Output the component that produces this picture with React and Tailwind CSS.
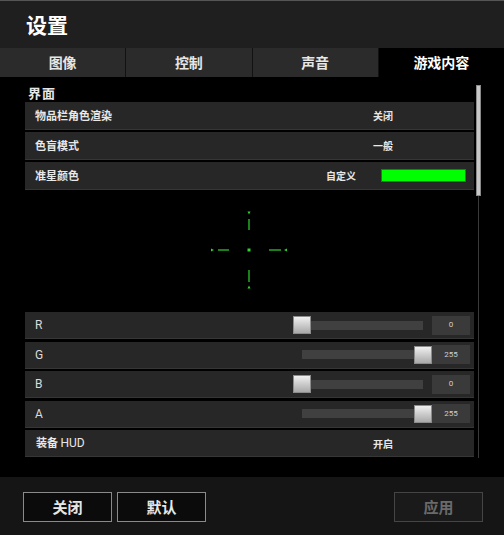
import React from 'react';

const CJK = { fontFamily: '"Noto Sans CJK SC", "Noto Sans", sans-serif' };
const LATIN = { fontFamily: 'Roboto, "Noto Sans CJK SC", sans-serif' };

const tabs = ['图像', '控制', '声音', '游戏内容'];

const channels = [
  { name: 'R', value: 0 },
  { name: 'G', value: 255 },
  { name: 'B', value: 0 },
  { name: 'A', value: 255 },
];

const Row = ({ children, className = '' }) => (
  <div className={`flex items-center bg-[#272727] border-b border-[#363636] ${className}`}>
    {children}
  </div>
);

const Slider = ({ value }) => {
  // thumb travel across a 139px control, track inset by half the thumb
  const left = Math.round((value / 255) * 121);
  return (
    <div className="relative w-[139px] h-[18px] flex items-center">
      <div className="mx-[9px] h-[9px] w-full bg-[#404040]" />
      <div
        className="absolute top-0 w-[18px] h-[18px] border border-[#8c8c8c] bg-gradient-to-b from-[#f0f0f0] to-[#a9a9a9]"
        style={{ left }}
      />
    </div>
  );
};

const Crosshair = () => (
  <svg width="449" height="120" viewBox="0 0 449 120">
    <g stroke="#27b827" strokeWidth="1.4" fill="none">
      <line x1="224" y1="29" x2="224" y2="40" />
      <line x1="224" y1="80" x2="224" y2="92" />
      <line x1="193" y1="60" x2="204" y2="60" />
      <line x1="244" y1="60" x2="256" y2="60" />
    </g>
    <g fill="#2fd22f">
      <rect x="222.5" y="58.5" width="3" height="3" />
      <polygon points="222.5,21.5 225.5,21.5 224,24.5" />
      <polygon points="222.5,98.5 225.5,98.5 224,95.5" />
      <polygon points="186,58.5 186,61.5 189,60" />
      <polygon points="262,58.5 262,61.5 259,60" />
    </g>
  </svg>
);

export default function App() {
  return (
    <div className="w-[504px] h-[535px] bg-black text-[#e8e8e8] overflow-hidden" style={CJK}>
      {/* Header */}
      <div className="h-[48px] bg-[#1f1f1f] border-t border-[#555] flex items-center pl-[26px]">
        <h1 className="text-[21px] font-bold text-white leading-none">设置</h1>
      </div>

      {/* Tabs */}
      <div className="flex h-[29px]">
        {tabs.map((t, i) => (
          <div
            key={t}
            className={
              i === 3
                ? 'flex-1 flex items-center justify-center bg-black text-white text-[14px] font-bold'
                : 'flex-1 flex items-center justify-center bg-[#2b2b2b] border-r border-[#121212] text-[#e6e6e6] text-[14px] font-bold'
            }
          >
            {t}
          </div>
        ))}
      </div>

      {/* Content */}
      <div className="flex h-[400px] bg-black pl-[25px] pt-[8px]">
        <div className="w-[449px] flex flex-col">
          <div className="h-[17px] pl-[3px] text-[13px] font-bold tracking-[1px] leading-[15px] text-[#e6e6e6]">
            界面
          </div>

          <div className="flex flex-col gap-[2px]">
            <Row className="h-[28px]">
              <span className="flex-1 pl-[10px] text-[11px] font-bold">物品栏角色渲染</span>
              <span className="w-[101px] text-[10px] font-bold">关闭</span>
            </Row>
            <Row className="h-[28px]">
              <span className="flex-1 pl-[10px] text-[11px] font-bold">色盲模式</span>
              <span className="w-[101px] text-[10px] font-bold">一般</span>
            </Row>
            <Row className="h-[28px]">
              <span className="flex-1 pl-[10px] text-[11px] font-bold">准星颜色</span>
              <span className="text-[10px] font-bold">自定义</span>
              <span className="ml-[25px] mr-[8px] w-[85px] h-[13px] bg-[#00ff00] border border-[#0a8a0a]" />
            </Row>
          </div>

          <div className="h-[122px] flex items-start">
            <Crosshair />
          </div>

          <div className="flex flex-col gap-[2.5px]">
            {channels.map((c) => (
              <Row key={c.name} className="h-[27px]">
                <span className="flex-1 pl-[10px] text-[12px] text-[#dcdcdc]" style={LATIN}>
                  {c.name}
                </span>
                <Slider value={c.value} />
                <div
                  className="mr-[4px] w-[38px] h-[19px] bg-[#3a3a3a] flex items-center justify-center text-[8px] text-[#cfcfcf]"
                  style={LATIN}
                >
                  {c.value}
                </div>
              </Row>
            ))}
            <Row className="h-[27px]">
              <span className="flex-1 pl-[11px] text-[11px] font-bold">
                装备 <span style={LATIN} className="text-[12px] font-normal">HUD</span>
              </span>
              <span className="w-[101px] text-[10px] font-bold">开启</span>
            </Row>
          </div>
        </div>

        {/* Scrollbar */}
        <div className="ml-[2px] w-[5px] flex flex-col">
          <div className="h-[111px] bg-[#c8c8c8] border border-[#8a8a8a]" />
          <div className="mx-auto w-px h-[262px] bg-[#3a3a3a]" />
        </div>
      </div>

      {/* Footer */}
      <div className="h-[58px] bg-[#151515] flex items-start pt-[15px] pl-[23px] pr-[21px]">
        <button className="w-[89px] h-[30px] bg-[#0b0b0b] border border-[#8a8a8a] text-[15px] font-bold text-[#e6e6e6]">
          关闭
        </button>
        <button className="ml-[5px] w-[89px] h-[30px] bg-[#0b0b0b] border border-[#8a8a8a] text-[15px] font-bold text-[#e6e6e6]">
          默认
        </button>
        <button className="ml-auto w-[89px] h-[30px] bg-[#1a1a1a] border border-[#454545] text-[15px] font-bold text-[#6a6a6a]">
          应用
        </button>
      </div>
    </div>
  );
}
